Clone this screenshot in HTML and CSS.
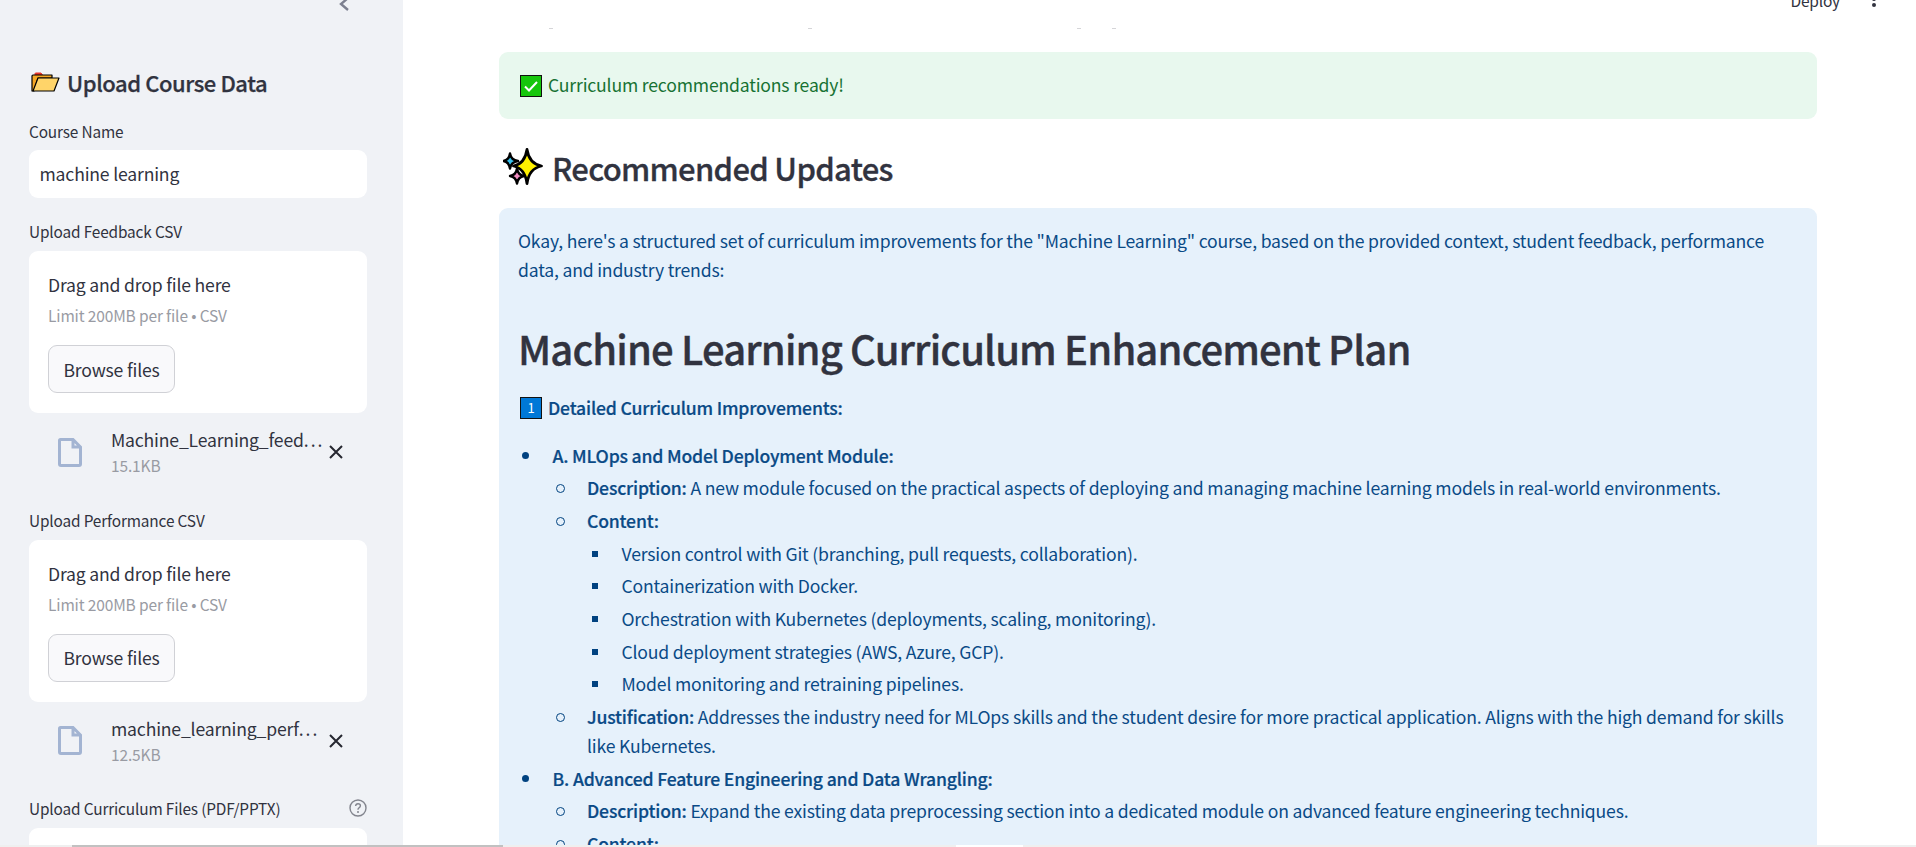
FILE: index.html
```html
<!DOCTYPE html>
<html lang="en">

<head>
    <meta charset="UTF-8">
    <meta name="viewport" content="width=device-width, initial-scale=1.0">
    <title>Curriculum recommendations</title>
    <link rel="stylesheet" href="styles.css">
</head>

<body>
    <div class="app">
        <aside class="sidebar">
            <svg class="collapse" width="14" height="20" viewBox="0 0 14 20"><path d="M10 1 L3 7 L10 13" fill="none" stroke="#7d8090" stroke-width="2.4"/></svg>

            <h2 class="side-title">
                <svg class="folder" width="29" height="20" viewBox="0 0 29 20">
                    <path d="M4 4 V1.500 Q4 1 5 1 H10 L11.500 3 V4 Z" fill="#e8352b" stroke="#e8352b" stroke-width="1"/>
                    <path d="M1 19 V4 Q1 3 2 3 H21 V6 H7 L3 19 Z" fill="#f5a623" stroke="#000" stroke-width="1.200" stroke-linejoin="round"/>
                    <path d="M2 19 L7 6 H28 L23 19 Z" fill="#ffd469" stroke="#000" stroke-width="1.200" stroke-linejoin="round"/>
                </svg>
                Upload Course Data
            </h2>

            <label class="field-label first">Course Name</label>
            <div class="text-input">machine learning</div>

            <label class="field-label">Upload Feedback CSV</label>
            <div class="dropzone">
                <div class="drop-title">Drag and drop file here</div>
                <div class="drop-limit">Limit 200MB per file • CSV</div>
                <button class="browse">Browse files</button>
            </div>
            <div class="file-row">
                <svg class="file-icon" width="24" height="29" viewBox="0 0 24 29"><path d="M2.500 1.500 H15 L22.500 9 V26 Q22.500 27.500 21 27.500 H3 Q1.500 27.500 1.500 26 V2.500 Q1.500 1.500 2.500 1.500 Z M15 1.500 V9 H22.500" fill="none" stroke="#a3b4d2" stroke-width="3"/></svg>
                <div class="file-info">
                    <div class="file-name">Machine_Learning_feed<span class="dots">...</span></div>
                    <div class="file-size">15.1KB</div>
                </div>
                <svg class="file-close" width="16" height="16" viewBox="0 0 16 16"><path d="M2 2 L14 14 M14 2 L2 14" stroke="#262730" stroke-width="2"/></svg>
            </div>

            <label class="field-label">Upload Performance CSV</label>
            <div class="dropzone">
                <div class="drop-title">Drag and drop file here</div>
                <div class="drop-limit">Limit 200MB per file • CSV</div>
                <button class="browse">Browse files</button>
            </div>
            <div class="file-row">
                <svg class="file-icon" width="24" height="29" viewBox="0 0 24 29"><path d="M2.500 1.500 H15 L22.500 9 V26 Q22.500 27.500 21 27.500 H3 Q1.500 27.500 1.500 26 V2.500 Q1.500 1.500 2.500 1.500 Z M15 1.500 V9 H22.500" fill="none" stroke="#a3b4d2" stroke-width="3"/></svg>
                <div class="file-info">
                    <div class="file-name">machine_learning_perf<span class="dots">...</span></div>
                    <div class="file-size">12.5KB</div>
                </div>
                <svg class="file-close" width="16" height="16" viewBox="0 0 16 16"><path d="M2 2 L14 14 M14 2 L2 14" stroke="#262730" stroke-width="2"/></svg>
            </div>

            <div class="field-label help-row">
                <span>Upload Curriculum Files (PDF/PPTX)</span>
                <svg width="18" height="18" viewBox="0 0 18 18"><circle cx="9" cy="9" r="8" fill="none" stroke="#83858e" stroke-width="1.400"/><path d="M6.600 7 Q6.800 4.700 9 4.700 Q11.400 4.700 11.400 6.800 Q11.400 8.100 10 8.800 Q9 9.300 9 10.800" fill="none" stroke="#83858e" stroke-width="1.400"/><circle cx="9" cy="13" r="1" fill="#83858e"/></svg>
            </div>
            <div class="dropzone"></div>
        </aside>

        <main class="main">
            <div class="topbar">
                <span class="deploy">Deploy</span>
                <svg width="6" height="28" viewBox="0 0 6 28"><circle cx="3" cy="13" r="2" fill="#31333f"/><circle cx="3" cy="19" r="2" fill="#31333f"/></svg>
            </div>

            <div class="clipped-line">
                <span></span><span class="t2"></span><span class="t3"></span><span class="t4"></span>
            </div>

            <div class="alert">
                <svg width="22" height="22" viewBox="0 0 22 22"><rect x="0.500" y="0.500" width="21" height="21" fill="#16c60c" stroke="#111" stroke-width="1"/><path d="M5 11.500 L9 15.500 L17 7" fill="none" stroke="#fff" stroke-width="2"/></svg>
                <span>Curriculum recommendations ready!</span>
            </div>

            <h2 class="section-title">
                <svg width="40" height="38" viewBox="0 0 40 38">
                    <path d="M7 5.500 Q8 12 15 13 Q8 14 7 20.500 Q6 14 0.500 13 Q6 12 7 5.500 Z" fill="#35c0ee" stroke="#000" stroke-width="2.400" stroke-linejoin="round"/>
                    <path d="M14 20.500 Q15 27 21 28 Q15 29 14 35.500 Q13 29 7 28 Q13 27 14 20.500 Z" fill="#f08cc0" stroke="#000" stroke-width="2.400" stroke-linejoin="round"/>
                    <path d="M24 1.500 Q26 15.500 38.500 18 Q26 20.500 24 35.500 Q22 20.500 10.500 18 Q22 15.500 24 1.500 Z" fill="#fff100" stroke="#000" stroke-width="2.800" stroke-linejoin="round"/>
                </svg>
                Recommended Updates
            </h2>

            <div class="info">
                <p class="intro">Okay, here's a structured set of curriculum improvements for the "Machine Learning" course, based on the provided context, student feedback, performance data, and industry trends:</p>
                <h1>Machine Learning Curriculum Enhancement Plan</h1>
                <p class="step">
                    <svg width="22" height="22" viewBox="0 0 22 22"><rect x="0.500" y="0.500" width="21" height="21" fill="#0078d7" stroke="#111" stroke-width="1"/><text x="11" y="16" text-anchor="middle" font-size="13" fill="#fff">1</text></svg>
                    <strong>Detailed Curriculum Improvements:</strong>
                </p>
                <ul>
                    <li><strong>A. MLOps and Model Deployment Module:</strong>
                        <ul>
                            <li><strong>Description:</strong> A new module focused on the practical aspects of deploying and managing machine learning models in real-world environments.</li>
                            <li><strong>Content:</strong>
                                <ul>
                                    <li>Version control with Git (branching, pull requests, collaboration).</li>
                                    <li>Containerization with Docker.</li>
                                    <li>Orchestration with Kubernetes (deployments, scaling, monitoring).</li>
                                    <li>Cloud deployment strategies (AWS, Azure, GCP).</li>
                                    <li>Model monitoring and retraining pipelines.</li>
                                </ul>
                            </li>
                            <li><strong>Justification:</strong> Addresses the industry need for MLOps skills and the student desire for more practical application. Aligns with the high demand for skills like Kubernetes.</li>
                        </ul>
                    </li>
                    <li><strong>B. Advanced Feature Engineering and Data Wrangling:</strong>
                        <ul>
                            <li><strong>Description:</strong> Expand the existing data preprocessing section into a dedicated module on advanced feature engineering techniques.</li>
                            <li><strong>Content:</strong></li>
                        </ul>
                    </li>
                </ul>
            </div>
        </main>

        <div class="scrollbar">
            <div class="thumb"></div>
            <div class="patch"></div>
        </div>
    </div>
</body>

</html>
```

FILE: styles.css
```css
* {
    box-sizing: border-box;
}

html,
body {
    margin: 0;
    height: 100%;
    overflow: hidden;
}

body {
    font-family: "Noto Sans CJK JP", "Noto Sans", sans-serif;
    font-size: 17.600px;
    letter-spacing: -0.180px;
    line-height: 29px;
    color: #31333f;
    background-color: #fff;
}

.app {
    position: relative;
    display: flex;
    height: 847px;
    overflow: hidden;
}

/* sidebar */

.sidebar {
    position: relative;
    flex: 0 0 403px;
    padding: 0 36px 0 29px;
    background-color: #f0f2f6;
}

.collapse {
    position: absolute;
    top: -3px;
    left: 338px;
}

.side-title {
    display: flex;
    align-items: center;
    gap: 7px;
    height: 30px;
    margin: 67px 0 0 2px;
    font-size: 22px;
    font-weight: 500;
    letter-spacing: -0.430px;
    -webkit-text-stroke: 0.250px;
}

.field-label {
    display: block;
    height: 20px;
    margin-top: 23px;
    font-size: 15.400px;
    letter-spacing: -0.150px;
    line-height: 20px;
}

.field-label.first {
    margin-top: 24px;
}

.text-input {
    height: 48px;
    margin-top: 9px;
    padding: 0 10.500px;
    line-height: 48px;
    background-color: #fff;
    border-radius: 9px;
}

.dropzone {
    height: 162px;
    margin-top: 10px;
    padding: 19px;
    background-color: #fff;
    border-radius: 9px;
}

.drop-title {
    line-height: 30px;
}

.drop-limit {
    font-size: 15.500px;
    letter-spacing: -0.140px;
    line-height: 30px;
    color: #999ba3;
}

.browse {
    display: block;
    width: 127px;
    height: 48px;
    margin-top: 15px;
    padding: 0;
    font: inherit;
    letter-spacing: inherit;
    color: #31333f;
    background-color: #f9f9fb;
    border: 1px solid #d0d1d6;
    border-radius: 9px;
}

.file-row {
    display: flex;
    align-items: center;
    height: 63.500px;
    margin-top: 10px;
    padding: 0 0 5.500px 29px;
}

.file-info {
    flex: 1;
    margin-left: 29px;
}

.file-name {
    line-height: 26px;
    white-space: nowrap;
}

.dots {
    letter-spacing: 2px;
}

.file-size {
    font-size: 15.500px;
    letter-spacing: -0.140px;
    line-height: 24px;
    color: #999ba3;
}

.file-close {
    margin-right: 23px;
}

.help-row {
    display: flex;
    align-items: center;
    justify-content: space-between;
}

/* main */

.main {
    position: relative;
    flex: 1;
    padding: 52px 99px 0 96px;
}

.topbar {
    position: absolute;
    top: -14px;
    right: 39px;
    display: flex;
    align-items: flex-start;
    gap: 31px;
    font-size: 15.500px;
    line-height: 28px;
}

/* bottoms of a text line scrolled away above the alert */
.clipped-line {
    position: absolute;
    top: 28px;
    left: 146px;
    display: flex;
}

.clipped-line span {
    width: 4px;
    height: 1px;
    background-color: #d5d5d8;
}

.clipped-line .t2 {
    margin-left: 255px;
}

.clipped-line .t3 {
    margin-left: 265px;
}

.clipped-line .t4 {
    margin-left: 31px;
}

.alert {
    display: flex;
    align-items: center;
    gap: 6px;
    height: 67px;
    padding-left: 21px;
    color: #177233;
    background-color: #e8f8ee;
    border-radius: 9px;
}

.alert span {
    margin-top: -2px;
}

.section-title {
    display: flex;
    align-items: center;
    gap: 9px;
    height: 50px;
    margin: 23px 0 16px 4px;
    font-size: 31px;
    font-weight: 500;
    letter-spacing: -0.700px;
    -webkit-text-stroke: 0.300px;
}

.info {
    min-height: 700px;
    padding: 18px 19px;
    color: #0a4a86;
    background-color: #e6f1fb;
    border-radius: 9px 9px 0 0;
}

.info strong {
    font-weight: 500;
    -webkit-text-stroke: 0.200px;
}

.intro {
    margin: 0;
}

h1 {
    margin: 36px 0 0;
    font-size: 40px;
    line-height: 56px;
    font-weight: 500;
    letter-spacing: -0.850px;
    -webkit-text-stroke: 0.400px;
    color: #31333f;
}

.step {
    display: flex;
    align-items: center;
    gap: 6px;
    margin: 17px 0 0;
    padding-left: 2px;
}

.info ul {
    margin: 0;
    padding-left: 34.500px;
    list-style: none;
}

.info > ul {
    margin-top: 18.500px;
}

.info li {
    position: relative;
    margin-top: 3.700px;
}

/* markers sit further out than the browser's own */
.info li::before {
    content: "";
    position: absolute;
    top: 11px;
    left: -31px;
    width: 7px;
    height: 7px;
    border-radius: 50%;
    background-color: #004280;
}

.info ul ul li::before {
    background-color: transparent;
    border: 1.500px solid #004280;
}

.info ul ul ul li::before {
    top: 12px;
    left: -30px;
    width: 6px;
    height: 6px;
    border: 0;
    border-radius: 0;
    background-color: #004280;
}

.scrollbar {
    position: absolute;
    left: 0;
    right: 0;
    bottom: 0;
    display: flex;
    height: 2px;
    background-color: #efefef;
}

.thumb {
    width: 431px;
    margin-left: 72px;
    background-color: #c1c1c1;
}

.patch {
    width: 67px;
    margin-left: 453px;
    background-color: #fff;
}
```
